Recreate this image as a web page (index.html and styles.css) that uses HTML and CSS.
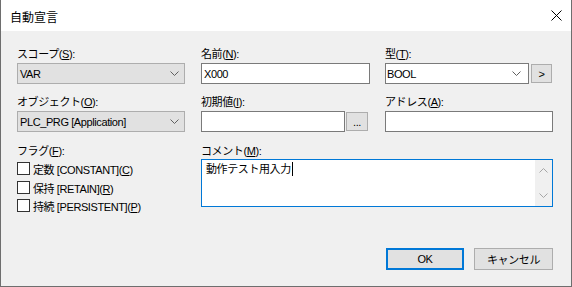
FILE: index.html
```html
<!DOCTYPE html>
<html lang="ja">
<head>
<meta charset="utf-8">
<link rel="stylesheet" href="styles.css">
</head>
<body>
<div class="window">
  <div class="titlebar">
    <span class="title">自動宣言</span>
    <svg class="close" width="11" height="11" viewBox="0 0 11 11"><path d="M0.5 0.5 L10.5 10.5 M10.5 0.5 L0.5 10.5" stroke="#000" stroke-width="1" fill="none"/></svg>
  </div>
  <div class="body">
    <div class="grid">
      <div class="field">
        <div class="lbl">スコープ(<u>S</u>):</div>
        <div class="select gray w168"><span>VAR</span><svg class="chev" width="9" height="5" viewBox="0 0 9 5"><path d="M0.5 0.5 L4.5 4.5 L8.5 0.5" stroke="#606060" fill="none"/></svg></div>
      </div>
      <div class="field">
        <div class="lbl">名前(<u>N</u>):</div>
        <div class="input w169"><span>X000</span></div>
      </div>
      <div class="field">
        <div class="lbl">型(<u>T</u>):</div>
        <div class="pair">
          <div class="select white w144"><span>BOOL</span><svg class="chev" width="9" height="5" viewBox="0 0 9 5"><path d="M0.5 0.5 L4.5 4.5 L8.5 0.5" stroke="#606060" fill="none"/></svg></div>
          <div class="btn small w21">&gt;</div>
        </div>
      </div>

      <div class="field">
        <div class="lbl">オブジェクト(<u>O</u>):</div>
        <div class="select gray w168"><span>PLC_PRG [Application]</span><svg class="chev" width="9" height="5" viewBox="0 0 9 5"><path d="M0.5 0.5 L4.5 4.5 L8.5 0.5" stroke="#606060" fill="none"/></svg></div>
      </div>
      <div class="field">
        <div class="lbl">初期値(<u>I</u>):</div>
        <div class="pair gap1">
          <div class="input w144"></div>
          <div class="btn small w22">...</div>
        </div>
      </div>
      <div class="field">
        <div class="lbl">アドレス(<u>A</u>):</div>
        <div class="input w168"></div>
      </div>

      <div class="field row3">
        <div class="lbl">フラグ(<u>F</u>):</div>
        <div class="checks">
          <div class="check"><span class="box"></span><span>定数 [CONSTANT](<u>C</u>)</span></div>
          <div class="check"><span class="box"></span><span>保持 [RETAIN](<u>R</u>)</span></div>
          <div class="check"><span class="box"></span><span>持続 [PERSISTENT](<u>P</u>)</span></div>
        </div>
      </div>
      <div class="field row3 span2">
        <div class="lbl">コメント(<u>M</u>):</div>
        <div class="textarea">
          <div class="text"><span>動作テスト用入力</span><span class="caret"></span></div>
          <div class="scroll">
            <svg width="9" height="5" viewBox="0 0 9 5"><path d="M0.5 4.5 L4.5 0.5 L8.5 4.5" stroke="#a6a6a6" fill="none"/></svg>
            <svg width="9" height="5" viewBox="0 0 9 5"><path d="M0.5 0.5 L4.5 4.5 L8.5 0.5" stroke="#a6a6a6" fill="none"/></svg>
          </div>
        </div>
      </div>
    </div>
    <div class="footer">
      <div class="btn default">OK</div>
      <div class="btn cancel">キャンセル</div>
    </div>
  </div>
</div>
</body>
</html>
```
FILE: styles.css
```css
* { box-sizing: border-box; }
html, body { margin: 0; padding: 0; }
body {
  width: 572px;
  height: 287px;
  overflow: hidden;
  background: #f0f0f0;
  font-family: "Liberation Sans", "Noto Sans CJK JP", sans-serif;
  font-size: 11px;
  letter-spacing: -0.4px;
  color: #000;
}
u { text-decoration: underline; text-underline-offset: 1px; }
.window {
  width: 572px;
  height: 287px;
  display: flex;
  flex-direction: column;
  border: 1px solid #6e6e6e;
  border-top: none;
  background: #f0f0f0;
}
.titlebar {
  flex: none;
  height: 31px;
  background: #fff;
  display: flex;
  align-items: center;
  justify-content: space-between;
  padding: 1px 9px 0 9px;
}
.title {
  font-family: "Noto Sans CJK JP", sans-serif;
  font-size: 12px;
  letter-spacing: 0;
}
.close { display: block; margin-top: -1px; }
.body {
  flex: 1;
  display: flex;
  flex-direction: column;
  padding: 15px 18px 16px 16px;
}
.grid {
  display: grid;
  grid-template-columns: 184px 184px 168px;
  row-gap: 10px;
}
.lbl {
  height: 16px;
  line-height: 16px;
  margin-bottom: 1px;
  white-space: nowrap;
}
.row3 { margin-top: 1px; }
.row3 .lbl { margin-bottom: 0; }
.span2 { grid-column: 2 / span 2; }
.w168 { width: 168px; }
.w169 { width: 169px; }
.w144 { width: 144px; }
.w21 { width: 21px; }
.w22 { width: 22px; }
.select, .input {
  height: 21px;
  display: flex;
  align-items: center;
  padding-left: 2px;
  white-space: nowrap;
}
.select { justify-content: space-between; padding-right: 5px; }
.select.gray { background: #e1e1e1; border: 1px solid #adadad; }
.select.white { background: #fff; border: 1px solid #7a7a7a; padding-left: 1px; padding-right: 7px; }
.input { background: #fff; border: 1px solid #7a7a7a; }
.chev { display: block; flex: none; }
.pair { display: flex; align-items: center; gap: 2px; }
.pair.gap1 { gap: 1px; }
.btn {
  display: flex;
  align-items: center;
  justify-content: center;
  background: #e1e1e1;
  border: 1px solid #adadad;
}
.btn.small { height: 19px; }
.checks {
  display: flex;
  flex-direction: column;
  gap: 5px;
  margin-top: 3px;
}
.check {
  display: flex;
  align-items: center;
  height: 13px;
  gap: 3px;
  white-space: nowrap;
}
.check:nth-child(2) { margin-top: 1px; }
.box {
  flex: none;
  width: 13px;
  height: 13px;
  background: #fff;
  border: 1px solid #333;
}
.textarea {
  width: 352px;
  height: 48px;
  border: 1px solid #0078d7;
  background: #fff;
  display: flex;
}
.text {
  flex: 1;
  padding: 1px 0 0 4px;
  line-height: 16px;
  font-size: 11px;
  display: flex;
  align-items: flex-start;
}
.caret {
  display: inline-block;
  width: 1px;
  height: 14px;
  background: #000;
  margin-top: 1px;
  margin-left: 1px;
}
.scroll {
  width: 17px;
  flex: none;
  background: #f0f0f0;
  display: flex;
  flex-direction: column;
  justify-content: space-between;
  align-items: center;
  padding: 8px 0 8px 0;
}
.scroll svg { display: block; }
.footer {
  margin-top: auto;
  display: flex;
  justify-content: flex-end;
  gap: 10px;
}
.footer .btn { height: 22px; }
.btn.default { width: 78px; border: 2px solid #0078d7; }
.btn.cancel { width: 79px; }
```
